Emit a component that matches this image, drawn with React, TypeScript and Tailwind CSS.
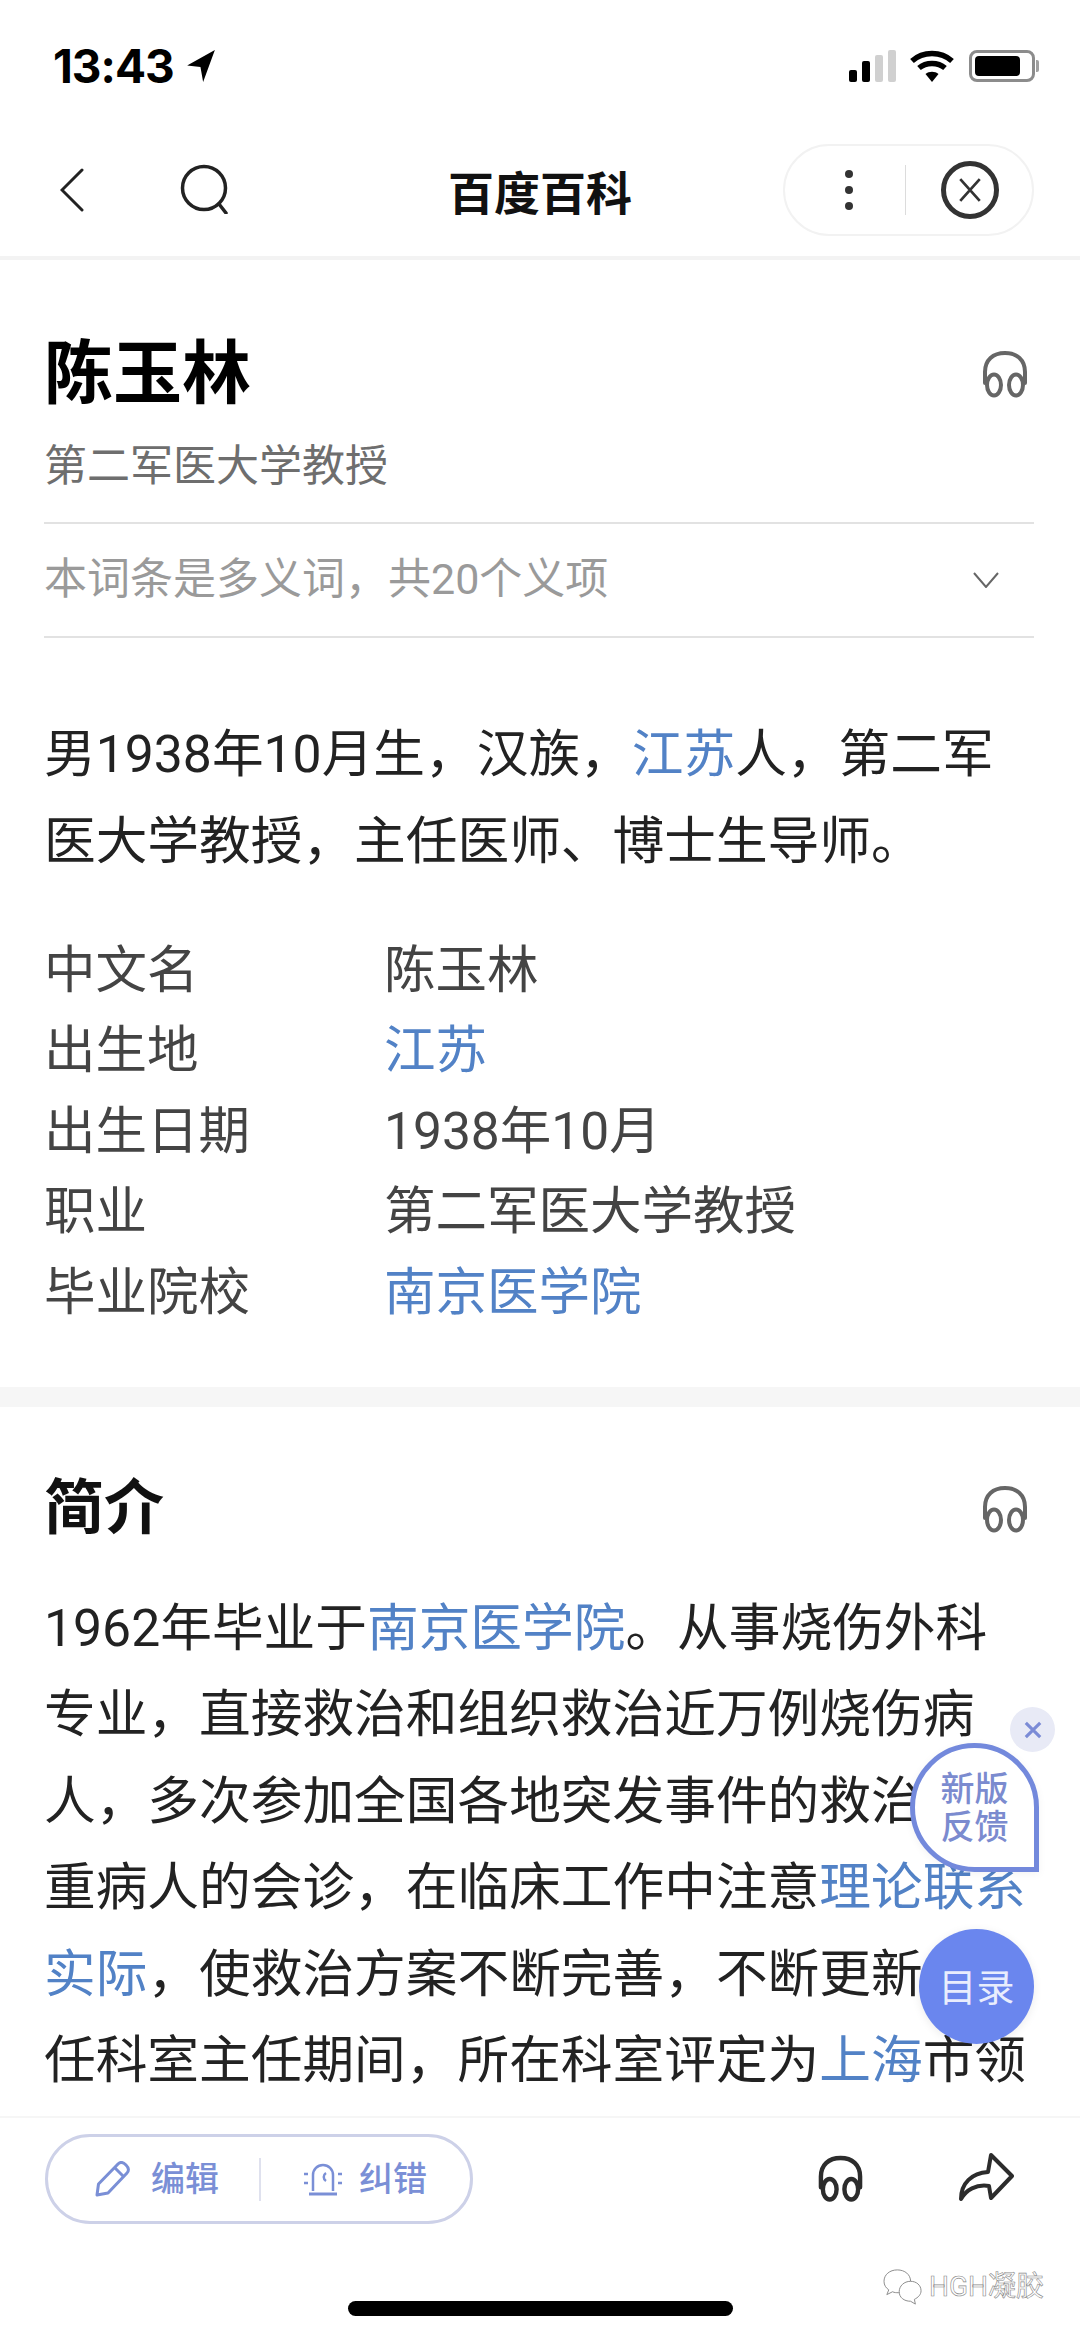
import * as React from 'react';

const Headphones: React.FC<{ className?: string; strokeWidth?: number }> = ({ className, strokeWidth = 4 }) => (
  <svg viewBox="0 0 48 48" fill="none" stroke="currentColor" strokeWidth={strokeWidth} className={className}>
    <path d="M4 33V22C4 10 12 3 24 3s20 7 20 19v11" strokeLinecap="round" />
    <ellipse cx="13" cy="35" rx="7" ry="10.500" />
    <ellipse cx="35" cy="35" rx="7" ry="10.500" />
  </svg>
);

const rows: { label: string; value: string; link?: boolean }[] = [
  { label: '中文名', value: '陈玉林' },
  { label: '出生地', value: '江苏', link: true },
  { label: '出生日期', value: '1938年10月' },
  { label: '职业', value: '第二军医大学教授' },
  { label: '毕业院校', value: '南京医学院', link: true },
];

const Link: React.FC<{ children: React.ReactNode }> = ({ children }) => (
  <span className="text-[#5282c6]">{children}</span>
);

const StatusBar = () => (
  <div className="flex h-[144px] shrink-0 items-start justify-between pl-[53px] pr-[41px] pt-[44px]">
    <div className="flex items-center gap-[12px] font-['Inter']">
      <span className="text-[46px] font-bold leading-[44px] tracking-[-1px] text-black">13:43</span>
      <svg viewBox="0 0 28 30" className="h-[32px] w-[30px]" fill="black">
        <path d="M27 0 1 14.500l12.500 1.500L16 30z" />
      </svg>
    </div>
    <div className="flex items-center pt-[6px]">
      <div className="flex items-end gap-[5px]">
        <div className="h-[12px] w-[8px] rounded-[2px] bg-black" />
        <div className="h-[21px] w-[8px] rounded-[2px] bg-black" />
        <div className="h-[27px] w-[8px] rounded-[2px] bg-[#d0d0d0]" />
        <div className="h-[32px] w-[8px] rounded-[2px] bg-[#d0d0d0]" />
      </div>
      <svg viewBox="0 0 46 32" className="ml-[13px] h-[32px] w-[46px]" fill="none" stroke="black" strokeWidth="5.500">
        <path d="M3 11C14 1 32 1 43 11" />
        <path d="M10 18c7-6 19-6 26 0" />
        <path d="M23 32l-6.500-8c3.500-3 9.500-3 13 0z" fill="black" stroke="none" />
      </svg>
      <div className="ml-[14px] flex items-center">
        <div className="flex h-[32px] w-[66px] items-center rounded-[8px] border-[3px] border-[#8c8c8c] p-[3px]">
          <div className="h-full w-[45px] rounded-[4px] bg-black" />
        </div>
        <div className="ml-[1px] h-[12px] w-[3px] rounded-r-[2px] bg-[#a0a0a0]" />
      </div>
    </div>
  </div>
);

const NavBar = () => (
  <div className="relative flex h-[116px] shrink-0 items-start border-b-[4px] border-[#f3f3f3] pl-[60px]">
    <svg viewBox="0 0 24 44" className="mt-[24px] h-[44px] w-[24px]" fill="none" stroke="#222" strokeWidth="3" strokeLinecap="round">
      <path d="M22 2 2 22l20 20" />
    </svg>
    <svg viewBox="0 0 50 50" className="ml-[96px] mt-[20px] h-[50px] w-[50px]" fill="none" stroke="#222" strokeWidth="3.500" strokeLinecap="round">
      <circle cx="24" cy="24" r="21.500" />
      <path d="M39 40l7 9" />
    </svg>
    <div className="absolute left-0 right-0 top-[21px] text-center text-[46px] font-bold leading-[58px] text-[#111]">百度百科</div>
    <div className="absolute right-[46px] top-0 flex h-[92px] w-[251px] items-center rounded-[46px] border-2 border-[#f2f2f2] bg-white">
      <div className="ml-[60px] flex flex-col gap-[8px]">
        <div className="h-[8px] w-[8px] rounded-full bg-[#333]" />
        <div className="h-[8px] w-[8px] rounded-full bg-[#333]" />
        <div className="h-[8px] w-[8px] rounded-full bg-[#333]" />
      </div>
      <div className="ml-[52px] h-[50px] w-[1px] bg-[#dcdcdc]" />
      <div className="ml-[35px] flex h-[58px] w-[58px] items-center justify-center rounded-full border-[5px] border-[#333]">
        <svg viewBox="0 0 24 24" className="h-[26px] w-[26px]" fill="none" stroke="#333" strokeWidth="2.500">
          <path d="M3 2l18 20M21 2 3 22" />
        </svg>
      </div>
    </div>
  </div>
);

const Intro = () => (
  <div className="flex flex-col pl-[44px] pr-[46px]">
    <div className="flex items-start justify-between pt-[73px] pr-[5px]">
      <h1 className="text-[69px] font-bold leading-[84px] text-black">陈玉林</h1>
      <Headphones className="mt-[17px] h-[48px] w-[48px] text-[#666]" />
    </div>
    <div className="mt-[20px] text-[43px] leading-[58px] text-[#6e6e6e]">第二军医大学教授</div>
    <div className="mt-[27px] flex h-[116px] items-center justify-between border-y-2 border-[#e2e2e2] pr-[35px]">
      <span className="-mt-[2px] text-[43px] leading-[58px] text-[#9a9a9a]">本词条是多义词，共20个义项</span>
      <svg viewBox="0 0 26 16" className="h-[16px] w-[26px]" fill="none" stroke="#666" strokeWidth="2">
        <path d="M1 1l12 14L25 1" />
      </svg>
    </div>
    <p className="mt-[73px] text-[51.700px] leading-[87px] text-[#222]">
      男1938年10月生，汉族，<Link>江苏</Link>人，第二军医大学教授，主任医师、博士生导师。
    </p>
    <div className="mt-[45px] flex flex-col">
      {rows.map((row) => (
        <div key={row.label} className="grid h-[80.500px] grid-cols-[340px_1fr] items-center text-[51.500px] text-[#444]">
          <span>{row.label}</span>
          <span className={row.link ? 'text-[#5282c6]' : ''}>{row.value}</span>
        </div>
      ))}
    </div>
  </div>
);

const Summary = () => (
  <div className="flex min-h-0 flex-1 flex-col overflow-hidden pl-[44px] pr-[46px]">
    <div className="flex items-center justify-between pt-[67px] pr-[5px]">
      <h2 className="text-[60px] font-bold leading-[70px] text-[#111]">简介</h2>
      <Headphones className="h-[48px] w-[48px] text-[#666]" />
    </div>
    <p className="mt-[42px] text-[51.700px] leading-[86.600px] text-[#222]">
      1962年毕业于<Link>南京医学院</Link>。从事烧伤外科专业，直接救治和组织救治近万例烧伤病人，多次参加全国各地突发事件的救治和危重病人的会诊，在临床工作中注意<Link>理论联系实际</Link>，使救治方案不断完善，不断更新。担任科室主任期间，所在科室评定为<Link>上海</Link>市领
    </p>
  </div>
);

const BottomBar = () => (
  <div className="flex h-[223px] shrink-0 items-start justify-between border-t-2 border-[#f6f6f6] bg-white pl-[45px] pr-[66px] pt-[16px]">
    <div className="flex h-[90px] w-[428px] items-center rounded-[45px] border-[3px] border-[#cdd1e8] pl-[47px] text-[34px] font-medium text-[#7a8fd6]">
      <svg viewBox="0 0 36 36" className="h-[36px] w-[36px]" fill="none" stroke="currentColor" strokeWidth="3" strokeLinejoin="round">
        <path d="M2 34l1.500-11L23 3c2-2 5-2 8 1s3 6 1 8L13 32z" />
        <path d="M20 7l9 9" />
      </svg>
      <span className="ml-[20px]">编辑</span>
      <div className="ml-[40px] h-[43px] w-[2px] bg-[#dfe1ee]" />
      <svg viewBox="0 0 40 36" className="ml-[42px] h-[36px] w-[40px]" fill="none" stroke="currentColor" strokeWidth="2.500">
        <path d="M10 30V14a10 10 0 0 1 20 0v16" />
        <path d="M6 33h28" strokeWidth="3" />
        <path d="M23 12c-3 2-3 6 0 8" />
        <path d="M1 13h4M1 22h4M35 13h4M35 22h4" />
      </svg>
      <span className="ml-[16px]">纠错</span>
    </div>
    <div className="flex items-start gap-[94px] pt-[18px]">
      <Headphones className="mt-[3px] h-[47px] w-[47px] text-[#2c2c2c]" strokeWidth={4.5} />
      <svg viewBox="0 0 56 50" className="h-[50px] w-[56px]" fill="none" stroke="#2c2c2c" strokeWidth="4" strokeLinejoin="round">
        <path d="M3 47C3 31 14 21 30 20L33 3l21 21-21 22-2-12C18 32 8 38 3 47z" />
      </svg>
    </div>
  </div>
);

const FloatingActions = () => (
  <>
    <div className="absolute left-[1010px] top-[1707px] flex h-[45px] w-[45px] items-center justify-center rounded-full bg-[#e8eaf6]">
      <svg viewBox="0 0 20 20" className="h-[18px] w-[18px]" fill="none" stroke="#7b8bd6" strokeWidth="3.500">
        <path d="M2 2l16 16M18 2 2 18" />
      </svg>
    </div>
    <div className="absolute left-[910px] top-[1743px] flex h-[129px] w-[129px] items-center justify-center rounded-full rounded-br-none border-[5px] border-[#7389dc] bg-white text-center text-[34px] font-medium leading-[38px] text-[#7b8bcf] shadow-[0_2px_8px_rgba(0,0,0,0.05)]">
      新版<br />反馈
    </div>
    <div className="absolute left-[919px] top-[1929px] flex h-[115px] w-[115px] items-center justify-center rounded-full bg-[#6a86ee] pt-[3px] text-[38px] text-[#e9edfd] shadow-[0_2px_10px_rgba(0,0,0,0.08)]">
      目录
    </div>
  </>
);

const App = () => (
  <div
    className="relative flex h-[2339px] w-[1080px] flex-col overflow-hidden bg-white"
    style={{ fontFamily: 'Roboto, "Noto Sans CJK SC", sans-serif' }}
  >
    <StatusBar />
    <NavBar />
    <Intro />
    <div className="mt-[54px] h-[20px] shrink-0 bg-[#f6f6f6]" />
    <Summary />
    <BottomBar />
    <FloatingActions />
    <div className="absolute left-[348px] top-[2301px] h-[15px] w-[385px] rounded-[8px] bg-black" />
    <div className="absolute left-[882px] top-[2268px] flex items-center gap-[5px]">
      <svg viewBox="0 0 44 40" className="h-[38px] w-[42px]" fill="white" stroke="#888" strokeWidth="1">
        <path d="M16 2C8 2 2 7 2 14c0 4 2 7 5 9l-2 5 6-3c2 1 4 1 6 1C25 26 30 20 30 14 30 7 24 2 16 2z" />
        <path d="M30 14c-7 0-12 5-12 11s5 10 12 10l5 3-1-5c4-2 7-5 7-9 0-6-5-10-11-10z" />
      </svg>
      <span className="text-[28px] leading-[34px] text-white [-webkit-text-stroke:0.6px_#8a8a8a]">HGH凝胶</span>
    </div>
  </div>
);

export default App;
